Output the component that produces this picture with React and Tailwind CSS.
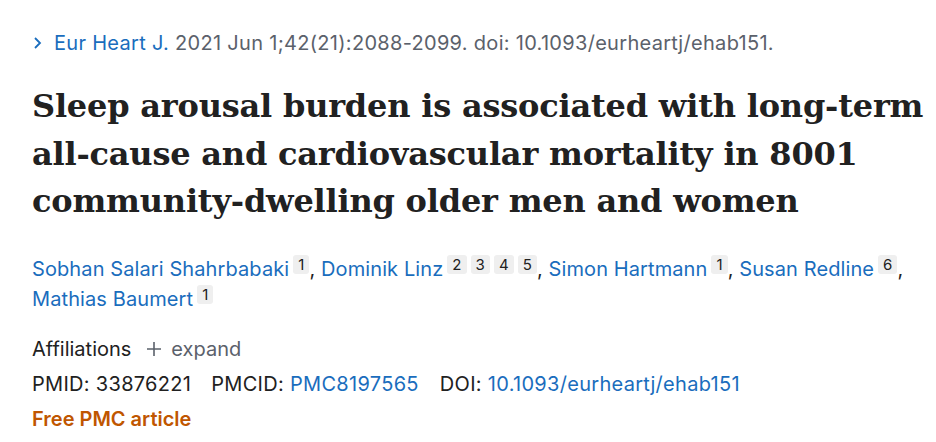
import React from "react"

const blue = "text-[#1a6dbd]"

function Sup({ n }) {
  return (
    <span className="ml-[4px] inline-block rounded-[3px] bg-[#efefef] px-[5px] text-[15px] leading-[19px] text-[#212121] align-[6px]">
      {n}
    </span>
  )
}

export default function App() {
  return (
    <div className="min-h-[442px] w-[936px] bg-white pl-[32px] pr-[4px] pt-[30px] font-['Inter',sans-serif] text-[#212121]">
      <div className="flex items-center text-[20px] leading-[26px] tracking-[0.3px]">
        <svg width="12" height="14" viewBox="0 0 12 14" className="mr-[10px]">
          <path d="M3 2l5 5-5 5" fill="none" stroke="#1a6dbd" strokeWidth="1.8" />
        </svg>
        <span className={blue}>Eur Heart J.</span>
        <span className="ml-[6px] text-[#5b616b]">2021 Jun 1;42(21):2088-2099. doi: 10.1093/eurheartj/ehab151.</span>
      </div>

      <h1 className="mt-[27px] font-['DejaVu_Serif',serif] text-[32px] font-bold leading-[47.5px] tracking-[-0.2px] text-[#212121]">
        <span className="block whitespace-nowrap">Sleep arousal burden is associated with long-term</span>
        <span className="block whitespace-nowrap">all-cause and cardiovascular mortality in 8001</span>
        <span className="block whitespace-nowrap">community-dwelling older men and women</span>
      </h1>

      <div className="mt-[28px] text-[20px] leading-[30px] tracking-[0.1px]">
        <a className={blue}>Sobhan Salari Shahrbabaki</a>
        <Sup n="1" />, <a className={blue}>Dominik Linz</a>
        <Sup n="2" />
        <Sup n="3" />
        <Sup n="4" />
        <Sup n="5" />, <a className={blue}>Simon Hartmann</a>
        <Sup n="1" />, <a className={blue}>Susan Redline</a>
        <Sup n="6" />, <a className={blue}>Mathias Baumert</a>
        <Sup n="1" />
      </div>

      <div className="mt-[20px] flex items-center text-[20px] leading-[30px]">
        <span>Affiliations</span>
        <svg width="16" height="16" viewBox="0 0 16 16" className="ml-[15px]">
          <path d="M8 1v14M1 8h14" stroke="#5b616b" strokeWidth="1.6" />
        </svg>
        <span className="ml-[9px] text-[#5b616b]">expand</span>
      </div>

      <div className="mt-[5px] flex text-[20px] leading-[30px] tracking-[0.3px]">
        <span>PMID: 33876221</span>
        <span className="ml-[20px]">
          PMCID: <a className={blue}>PMC8197565</a>
        </span>
        <span className="ml-[21px]">
          DOI: <a className={blue}>10.1093/eurheartj/ehab151</a>
        </span>
      </div>

      <div className="mt-[5px] text-[20px] font-semibold leading-[30px] text-[#c05600]">Free PMC article</div>
    </div>
  )
}
